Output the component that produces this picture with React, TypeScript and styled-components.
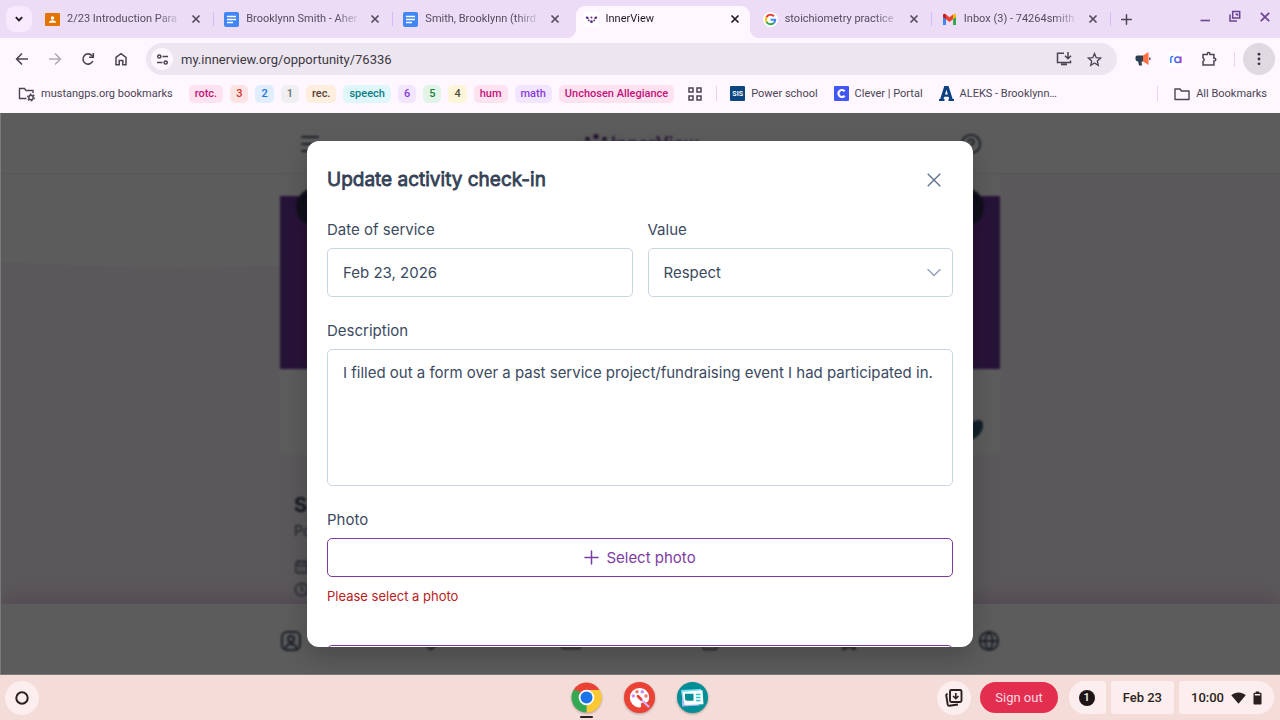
import React, { useState } from "react";
import styled, { createGlobalStyle, css } from "styled-components";
import {
  Menu,
  CircleHelp,
  CalendarDays,
  Clock,
  Globe,
  HeartHandshake,
  Mail,
  ClipboardList,
  Star,
} from "lucide-react";

const GlobalStyle = createGlobalStyle`
  * { box-sizing: border-box; }
  body {
    margin: 0;
    font-family: Roboto, "Liberation Sans", sans-serif;
    font-size: 12px;
    color: #4b4453;
  }
  button, input, select, textarea { font: inherit; color: inherit; margin: 0; }
  button { border: 0; padding: 0; background: none; cursor: pointer; }
  a { color: inherit; text-decoration: none; }
  svg { display: block; flex: none; }
`;

const Screen = styled.div`
  display: flex;
  flex-direction: column;
  min-height: 100vh;
  overflow: hidden;
`;

/* ---------- Browser: tab strip ---------- */

const TabStrip = styled.div`
  display: flex;
  align-items: center;
  height: 38px;
  background: #ecdcf6;
`;

const TabSearch = styled.button`
  display: grid;
  place-items: center;
  width: 26px;
  height: 26px;
  margin: 0 3px 0 6px;
  border-radius: 9px;
  background: #f8e9fd;
  color: #1f1a24;
`;

const TabList = styled.div`
  display: flex;
  flex: 0 1 1076px;
  min-width: 0;
  height: 38px;
`;

const Tab = styled.div<{ $active?: boolean; $divider?: boolean }>`
  position: relative;
  display: flex;
  flex: 1 1 0;
  align-items: center;
  min-width: 0;
  padding: 0 11px 0 10px;
  color: ${(p) => (p.$active ? "#1f1a24" : "#554c5e")};

  ${(p) =>
    p.$divider &&
    css`
      &::after {
        content: "";
        position: absolute;
        right: 0;
        top: 12px;
        width: 1px;
        height: 14px;
        background: #d9b8fb;
      }
    `}

  ${(p) =>
    p.$active &&
    css`
      margin: 6px 3px 0;
      padding: 0 8px 6px 8px;
      border-radius: 9px 9px 0 0;
      background: #fef7ff;

      &::before,
      &::after {
        content: "";
        position: absolute;
        bottom: 0;
        width: 9px;
        height: 9px;
      }
      &::before {
        right: 100%;
        background: radial-gradient(circle at 0 0, transparent 9px, #fef7ff 9px);
      }
      &::after {
        left: 100%;
        background: radial-gradient(circle at 100% 0, transparent 9px, #fef7ff 9px);
      }
    `}
`;

const TabTitle = styled.button`
  flex: 1;
  min-width: 0;
  margin-left: 7px;
  overflow: hidden;
  font-size: 11px;
  line-height: 16px;
  text-align: left;
  white-space: nowrap;
  mask-image: linear-gradient(90deg, #000 78%, transparent 100%);
`;

const TabClose = styled.button`
  display: grid;
  place-items: center;
  width: 14px;
  height: 14px;
  margin-left: 7px;
`;

const NewTab = styled.button`
  display: grid;
  place-items: center;
  width: 28px;
  height: 28px;
  margin-left: 1px;
`;

const WindowControls = styled.div`
  display: flex;
  gap: 14px;
  margin-left: auto;
  padding: 0 7px 5px 0;
  color: #6b4494;
`;

const WindowButton = styled.button`
  display: grid;
  place-items: center;
  width: 16px;
  height: 16px;
`;

/* ---------- Browser: toolbar ---------- */

const Toolbar = styled.div`
  display: flex;
  align-items: center;
  height: 42px;
  padding: 0 5px;
  background: #fef7ff;
`;

const ToolButton = styled.button<{ $dim?: boolean }>`
  display: grid;
  place-items: center;
  width: 33px;
  height: 32px;
  opacity: ${(p) => (p.$dim ? 0.42 : 1)};
`;

const Omnibox = styled.div`
  display: flex;
  flex: 1;
  align-items: center;
  min-width: 0;
  height: 32px;
  margin: 0 9px;
  padding: 0 8px 0 5px;
  border-radius: 16px;
  background: #ece6f0;
`;

const SiteInfo = styled.button`
  display: grid;
  place-items: center;
  width: 22px;
  height: 22px;
  border-radius: 50%;
  background: #fef7ff;
`;

const Address = styled.input`
  flex: 1;
  min-width: 0;
  height: 24px;
  margin-left: 8px;
  padding: 0;
  border: 0;
  outline: 0;
  background: transparent;
  color: #3d3843;
  font-size: 13px;
`;

const OmniButton = styled.button`
  display: grid;
  place-items: center;
  width: 30px;
  height: 28px;
`;

const ToolDivider = styled.span`
  width: 1px;
  height: 15px;
  margin: 0 8px 0 9px;
  background: #e6d0fb;
`;

const MenuButton = styled.button`
  display: grid;
  place-items: center;
  width: 32px;
  height: 32px;
  border-radius: 50%;
  background: #e0d9e1;
`;

/* ---------- Browser: bookmarks ---------- */

const BookmarkBar = styled.nav`
  display: flex;
  align-items: center;
  height: 33px;
  padding: 0 13px 6px 18px;
  background: #fef7ff;
  font-size: 11px;
  white-space: nowrap;
`;

const Bookmark = styled.a`
  display: flex;
  align-items: center;
  gap: 6px;
  margin-right: 16px;
`;

const AllBookmarks = styled(Bookmark)`
  margin: 0 0 0 16px;
`;

const Groups = styled.div`
  display: flex;
  gap: 7px;
`;

const Group = styled.button<{ $bg: string; $fg: string }>`
  height: 18px;
  padding: 0 6px;
  border-radius: 5px;
  background: ${(p) => p.$bg};
  color: ${(p) => p.$fg};
  font-weight: 500;
  line-height: 18px;
`;

const AppsButton = styled.button`
  margin: 0 14px;
`;

const BarDivider = styled.span<{ $push?: boolean }>`
  width: 1px;
  height: 15px;
  margin-left: ${(p) => (p.$push ? "auto" : "0")};
  margin-right: ${(p) => (p.$push ? "0" : "13px")};
  background: #e6d0fb;
`;

/* ---------- Page behind the dialog ---------- */

const Viewport = styled.main`
  position: relative;
  display: flex;
  flex: 1;
  min-height: 0;
  overflow: hidden;
  font-family: Inter, "Liberation Sans", sans-serif;
  background: radial-gradient(ellipse 640px 155px at 14% 0, #fff 99%, #fdf4fc 100%);
`;

const Page = styled.div`
  display: flex;
  flex: 1;
  flex-direction: column;
  min-width: 0;
  color: #475569;
`;

const SiteHeader = styled.header`
  height: 61px;
  border-bottom: 1px solid #f0eef2;
  background: #fff;
`;

const Column = styled.div`
  display: flex;
  align-items: center;
  justify-content: space-between;
  width: 100%;
  max-width: 720px;
  margin: 0 auto;
  filter: blur(1px);
`;

const HeaderRow = styled(Column)`
  height: 62px;
  padding: 0 18px;
`;

const Brand = styled.div`
  display: flex;
  align-items: center;
  gap: 2px;
  color: #6c359b;
  font-size: 18px;
  font-weight: 600;
  line-height: 24px;
`;

const Article = styled.article`
  flex: 1;
  width: 100%;
  max-width: 720px;
  margin: 0 auto;
  filter: blur(1px);
`;

const Card = styled.div`
  display: flex;
  flex-direction: column;
  height: 281px;
  padding-top: 22px;
  background: #fff;
`;

const Banner = styled.div`
  display: flex;
  justify-content: space-between;
  align-items: flex-start;
  height: 173px;
  padding: 0 16px;
  background: #6c359b;
`;

const RoundButton = styled.button`
  display: grid;
  place-items: center;
  width: 38px;
  height: 38px;
  margin-top: -8px;
  border-radius: 50%;
  background: #2a2c4c;
  color: #fff;
`;

const CardFooter = styled.div`
  display: flex;
  flex: 1;
  align-items: center;
  justify-content: flex-end;
  padding: 36px 16px 0;
`;

const Summary = styled.div`
  display: flex;
  flex-direction: column;
  padding: 36px 14px 0;
`;

const SummaryTitle = styled.h2`
  margin: 0;
  color: #334155;
  font-size: 20px;
  font-weight: 700;
  line-height: 28px;
`;

const SummaryLine = styled.p`
  display: flex;
  align-items: center;
  gap: 8px;
  height: 23px;
  margin: 0;
  font-size: 14px;
  line-height: 23px;
`;

const SummaryOwner = styled(SummaryLine)`
  margin-bottom: 13px;
`;

const SiteNav = styled.nav`
  height: 71px;
  background: #fff;
  box-shadow: 0 -8px 20px rgba(60, 20, 80, 0.16);
`;

const NavRow = styled(Column)`
  height: 74px;
`;

/* ---------- Dialog ---------- */

const Overlay = styled.div`
  position: absolute;
  inset: 0;
  display: flex;
  justify-content: center;
  padding: 28px 20px;
  background: rgba(0, 0, 0, 0.64);
  box-shadow: inset 1px -1px #7a7a7a;
`;

const Dialog = styled.section`
  display: flex;
  flex-direction: column;
  width: 100%;
  max-width: 666px;
  padding: 20px 20px 0;
  overflow: hidden;
  border-radius: 12px;
  background: #fff;
  color: #3b4a5f;
  font-size: 15px;
  line-height: 24px;
  box-shadow: 0 10px 24px rgba(0, 0, 0, 0.2);
`;

const DialogHeader = styled.header`
  display: flex;
  align-items: center;
  justify-content: space-between;
  height: 38px;
  flex: none;
  margin-bottom: 19px;
`;

const DialogTitle = styled.h1`
  margin: 0;
  color: #334155;
  font-size: 19px;
  font-weight: 400;
  line-height: 28px;
  -webkit-text-stroke: 0.04em #334155;
`;

const DialogClose = styled.button`
  display: grid;
  place-items: center;
  width: 38px;
  height: 38px;
  color: #64748b;
`;

const Form = styled.form`
  display: flex;
  flex-direction: column;
  gap: 22px;
`;

const FieldRow = styled.div`
  display: grid;
  grid-template-columns: 1fr 1fr;
  gap: 15px;
`;

const Field = styled.div`
  display: flex;
  flex-direction: column;
  min-width: 0;
`;

const Label = styled.label`
  margin-bottom: 6px;
`;

const control = css`
  width: 100%;
  border: 1px solid #cbd5e1;
  border-radius: 5px;
  outline: 0;
  background: #fff;
`;

const TextInput = styled.input`
  ${control}
  height: 49px;
  padding: 0 15px;
`;

const SelectWrap = styled.div`
  position: relative;

  svg {
    position: absolute;
    top: 16px;
    right: 11px;
    color: #94a3b8;
    pointer-events: none;
  }
`;

const Select = styled.select`
  ${control}
  appearance: none;
  height: 49px;
  padding: 0 36px 0 15px;
`;

const TextArea = styled.textarea`
  ${control}
  display: block;
  height: 137px;
  padding: 11px 15px;
  line-height: 24px;
  resize: none;
`;

const OutlineButton = styled.button`
  display: flex;
  align-items: center;
  justify-content: center;
  gap: 7px;
  width: 100%;
  height: 39px;
  border: 1px solid #7e3ca3;
  border-radius: 5px;
  color: #7e3ca3;
`;

const ErrorText = styled.p`
  margin: 8px 0 16px;
  color: #b91c1c;
  font-size: 13px;
  line-height: 22px;
`;

/* ---------- Shelf ---------- */

const Shelf = styled.footer`
  display: grid;
  grid-template-columns: 1fr auto 1fr;
  align-items: center;
  height: 45px;
  padding: 0 6px 0 5px;
  background: #f4dcd8;
  color: #2b1f20;
`;

const ShelfCircle = styled.button`
  display: grid;
  place-items: center;
  width: 34px;
  height: 34px;
  border-radius: 50%;
  background: #fceeee;
`;

const Apps = styled.div`
  display: flex;
  gap: 20px;
`;

const AppButton = styled.button<{ $running?: boolean }>`
  position: relative;
  width: 33px;
  height: 33px;

  svg { filter: drop-shadow(0 1px 1px rgba(60, 20, 20, 0.35)); }

  ${(p) =>
    p.$running &&
    css`
      &::after {
        content: "";
        position: absolute;
        left: 10px;
        top: 35px;
        width: 13px;
        height: 2px;
        border-radius: 1px;
        background: #2b1f20;
      }
    `}
`;

const Tray = styled.div`
  display: flex;
  align-items: center;
  justify-content: flex-end;
  gap: 5px;
`;

const SignOut = styled.button`
  height: 31px;
  margin: 0 6px 0 4px;
  padding: 0 15px;
  border-radius: 16px;
  background: #e42e50;
  color: #fcd9e0;
  font-size: 13px;
`;

const TrayPill = styled.button<{ $side?: "left" | "right" }>`
  display: flex;
  align-items: center;
  gap: 7px;
  height: 33px;
  padding: ${(p) => (p.$side === "left" ? "0 11px 0 10px" : "0 12px")};
  border-radius: ${(p) =>
    p.$side === "left" ? "16px 3px 3px 16px" : p.$side === "right" ? "3px 16px 16px 3px" : "3px"};
  background: #fceeee;
  font-size: 13px;
  font-weight: 500;
`;

/* ---------- Icons ---------- */

const line = { fill: "none", stroke: "currentColor" } as const;

const CloseIcon = ({ size = 10, weight = 1.7 }) => (
  <svg width={size} height={size} viewBox="0 0 10 10" {...line} strokeWidth={weight}>
    <path d="M1.500 1.500l7 7M8.500 1.500l-7 7" />
  </svg>
);

const ClassroomIcon = () => (
  <svg width="15" height="15" viewBox="0 0 15 15">
    <rect y="1" width="15" height="13" rx="1" fill="#e37400" />
    <circle cx="7.500" cy="6" r="1.700" fill="#fff" />
    <path d="M3.800 10.800c0-1.800 2.100-2.600 3.700-2.600s3.700.8 3.700 2.600z" fill="#fff" />
  </svg>
);

const DocsIcon = () => (
  <svg width="15" height="15" viewBox="0 0 15 15">
    <rect width="15" height="15" rx="2" fill="#4285f4" />
    <path d="M3 4.500h9M3 7.500h9M3 10.500h6" stroke="#fff" strokeWidth="1.500" />
  </svg>
);

const InnerViewIcon = () => (
  <svg width="15" height="15" viewBox="0 0 15 15" fill="#5b2a86">
    <rect width="15" height="15" rx="2" fill="#fff" />
    <circle cx="3" cy="5.600" r="1.200" />
    <path d="M2.200 4.800l3.200 1.200-2 1.200z" />
    <circle cx="12" cy="5.600" r="1.200" />
    <path d="M12.800 4.800L9.600 6l2 1.200z" />
    <circle cx="7.500" cy="5.500" r="1" />
    <circle cx="4.800" cy="8.400" r="0.900" />
    <circle cx="10.200" cy="8.400" r="0.900" />
    <circle cx="7.500" cy="9.700" r="1.400" />
  </svg>
);

const BrandSparks = () => (
  <svg width="26" height="26" viewBox="0 0 26 26" fill="#5b2a86">
    <circle cx="4.500" cy="8" r="2.300" />
    <circle cx="13" cy="5.500" r="2.600" />
    <circle cx="21.500" cy="8" r="2.300" />
    <circle cx="9" cy="12" r="1.700" />
    <circle cx="17" cy="12" r="1.700" />
    <circle cx="13" cy="17" r="2.600" />
  </svg>
);

const GoogleIcon = () => (
  <svg width="15" height="15" viewBox="0 0 15 15">
    <circle cx="7.500" cy="7.500" r="7.500" fill="#fff" />
    <g fill="none" strokeWidth="2.100">
      <path d="M11 4.300A4.700 4.700 0 0 0 3.500 5.100" stroke="#ea4335" />
      <path d="M3.500 5.100a4.700 4.700 0 0 0 0 4.900" stroke="#fbbc05" />
      <path d="M3.500 10a4.700 4.700 0 0 0 7.200 1" stroke="#34a853" />
      <path d="M10.700 11a4.700 4.700 0 0 0 1.500-3.300H7.600" stroke="#4285f4" />
    </g>
  </svg>
);

const GmailIcon = () => (
  <svg width="15" height="15" viewBox="0 0 15 15">
    <path d="M1 4v9h3V6.500z" fill="#4285f4" />
    <path d="M14 4v9h-3V6.500z" fill="#34a853" />
    <path d="M1 5V3.300C1 2 2.500 1.400 3.500 2.200L4 2.600v4.600z" fill="#c5221f" />
    <path d="M14 5V3.300c0-1.300-1.500-1.900-2.500-1.100l-.5.4v4.600z" fill="#fbbc04" />
    <path d="M4 2.600l3.500 2.700L11 2.600v4.600L7.500 9.900 4 7.200z" fill="#ea4335" />
  </svg>
);

const MinimizeIcon = () => (
  <svg width="16" height="16" viewBox="0 0 16 16" {...line} strokeWidth="1.600">
    <path d="M3.500 11.500h9.500" />
  </svg>
);

const RestoreIcon = () => (
  <svg width="16" height="16" viewBox="0 0 16 16" {...line} strokeWidth="1.500">
    <path d="M5.700 2.500h7v6.500h-7zM8.500 5.200h2v1.600M3 5.500v6.500h7" />
  </svg>
);

const BackIcon = () => (
  <svg width="14" height="14" viewBox="0 0 14 14" {...line} strokeWidth="1.600">
    <path d="M13 7H2M7 1.500L1.600 7 7 12.500" />
  </svg>
);

const ForwardIcon = () => (
  <svg width="14" height="14" viewBox="0 0 14 14" {...line} strokeWidth="1.600">
    <path d="M1 7h11M7 1.500L12.400 7 7 12.500" />
  </svg>
);

const ReloadIcon = () => (
  <svg width="14" height="14" viewBox="0 0 14 14" {...line} strokeWidth="1.600">
    <path d="M11.800 9A5.100 5.100 0 1 1 11 3.700l1 1.200" />
    <path d="M12.300 1v4.300H8" />
  </svg>
);

const HomeIcon = () => (
  <svg width="14" height="14" viewBox="0 0 14 14" {...line} strokeWidth="1.500">
    <path d="M2 5.400L7 1.600l5 3.800v7.300H8.800V8.500H5.200v4.200H2z" />
  </svg>
);

const TuneIcon = () => (
  <svg width="13" height="13" viewBox="0 0 13 13" {...line} strokeWidth="1.500">
    <circle cx="3.300" cy="3.500" r="1.600" />
    <path d="M6.500 3.500H12M1 9.500h5.500" />
    <circle cx="9.700" cy="9.500" r="1.600" />
  </svg>
);

const InstallIcon = () => (
  <svg width="16" height="16" viewBox="0 0 16 16" {...line} strokeWidth="1.500">
    <path d="M8 2.200H1.500v9.300h13V9.500" />
    <path d="M5 13.300h6" strokeWidth="2" />
    <path d="M12 1v6.500M9 4.700l3 3 3-3" />
  </svg>
);

const BookmarkStarIcon = () => (
  <svg width="15" height="15" viewBox="0 0 15 15" {...line} strokeWidth="1.300">
    <path d="M7.500 1.600l1.700 4.100 4.400.4-3.300 2.900 1 4.300-3.800-2.300-3.800 2.300 1-4.300L1.400 6.100l4.400-.4z" />
  </svg>
);

const MegaphoneIcon = () => (
  <svg width="16" height="16" viewBox="0 0 16 16">
    <path d="M0.500 6.500C.5 5 1.500 4.500 3 4.500h5v6H6.500l.5 4H4l-.8-4C1.500 10.300.5 9.500.5 8z" fill="#2c3e50" />
    <path d="M8 4.500l5.500-3.500v13l-5.500-3.500z" fill="#ff7043" />
    <path d="M14.800 6.500v2.500" stroke="#2c3e50" strokeWidth="1.300" />
  </svg>
);

const RaIcon = () => (
  <svg width="14" height="14" viewBox="0 0 14 14" fill="none" strokeWidth="1.500">
    <rect width="14" height="14" rx="2" fill="#fff" />
    <path d="M1.800 11V6.500c0-1.400 1-2 2.600-1.900" stroke="#2d7ff0" />
    <circle cx="8.700" cy="7.700" r="2.800" stroke="#5661e8" />
    <path d="M11.800 4.500V11" stroke="#a33fd0" />
  </svg>
);

const PuzzleIcon = () => (
  <svg width="16" height="16" viewBox="0 0 16 16" {...line} strokeWidth="1.500">
    <path d="M2 3.500h4.300V2.800a1.300 1.300 0 0 1 2.600 0v.7h4v3.800h.6a1.300 1.300 0 0 1 0 2.600h-.6v4H2v-3.500a2 2 0 0 0 0-3.600z" />
  </svg>
);

const DotsIcon = () => (
  <svg width="4" height="14" viewBox="0 0 4 14" fill="#3d3544">
    <circle cx="2" cy="2.200" r="1.400" />
    <circle cx="2" cy="7" r="1.400" />
    <circle cx="2" cy="11.800" r="1.400" />
  </svg>
);

const FolderIcon = () => (
  <svg width="16" height="14" viewBox="0 0 16 14" {...line} strokeWidth="1.400">
    <path d="M1 2h5l1.500 2H15v8.500H1z" strokeLinejoin="round" />
  </svg>
);

const ManagedFolderIcon = () => (
  <svg width="17" height="16" viewBox="0 0 17 16" {...line} strokeWidth="1.400">
    <path d="M8.500 12.500h-7V2.500h5l1.500 2h7V7" />
    <circle cx="13" cy="11.500" r="2.200" />
    <circle cx="13" cy="11.500" r="3.300" strokeDasharray="1.700 1.750" />
  </svg>
);

const AppsIcon = () => (
  <svg width="14" height="14" viewBox="0 0 14 14" {...line} strokeWidth="1.500">
    <path d="M1 1h4v4H1zM9 1h4v4H9zM1 9h4v4H1zM9 9h4v4H9z" />
  </svg>
);

const SisBadge = styled.span`
  display: grid;
  place-items: center;
  width: 15px;
  height: 15px;
  border-radius: 1px;
  background: #0b4680;
  color: #fff;
  font-size: 7px;
  font-weight: 700;
`;

const CleverIcon = () => (
  <svg width="15" height="15" viewBox="0 0 15 15">
    <rect width="15" height="15" rx="1" fill="#4258f5" />
    <path d="M10.600 5.200A3.500 3.500 0 1 0 10.600 9.800" fill="none" stroke="#fff" strokeWidth="2.200" />
  </svg>
);

const AleksIcon = () => (
  <svg width="15" height="15" viewBox="0 0 15 15" fill="#0d4080">
    <path fillRule="evenodd" d="M5.300 0h4.200l4.200 13H15v2H9.500v-2h.8l-.7-2.300H5.300L4.500 13h1v2H0v-2h1.200zM7.400 3.800L6 8.500h2.900z" />
  </svg>
);

const ProfileIcon = () => (
  <svg width="22" height="22" viewBox="0 0 22 22" {...line} strokeWidth="2">
    <rect x="2" y="2" width="18" height="18" rx="5" />
    <circle cx="11" cy="9" r="3" />
    <path d="M5 19c1-3.500 3-5 6-5s5 1.500 6 5" />
  </svg>
);

const LeafIcon = () => (
  <svg width="22" height="26" viewBox="0 0 22 26" fill="#2f5a73">
    <path d="M3 25C1 12 8 3 18 3c4 1 4 8 1 12-3 5-8 8-16 10z" />
  </svg>
);

const ChevronIcon = () => (
  <svg width="16" height="16" viewBox="0 0 16 16" {...line} strokeWidth="1.500" strokeLinecap="round" strokeLinejoin="round">
    <path d="M2 5.500l6 6 6-6" />
  </svg>
);

const PlusIcon = ({ size = 15, weight = 1.5 }) => (
  <svg width={size} height={size} viewBox="0 0 15 15" {...line} strokeWidth={weight} strokeLinecap="round">
    <path d="M7.500 1v13M1 7.500h13" />
  </svg>
);

const ChromeIcon = () => (
  <svg width="33" height="33" viewBox="0 0 33 33">
    <path d="M16.500 16.500L3.510 9A15 15 0 0 1 29.490 9z" fill="#ea4335" />
    <path d="M16.500 16.500L29.490 9A15 15 0 0 1 16.500 31.500z" fill="#fbc934" />
    <path d="M16.500 16.500V31.500A15 15 0 0 1 3.510 9z" fill="#34a853" />
    <path d="M16.500 9h13A15 15 0 0 1 16.500 31.500l6.500-11.300z" fill="#fbc934" />
    <path d="M10 20.300L3.510 9l6 1z" fill="#34a853" />
    <circle cx="16.500" cy="16.500" r="7.800" fill="#fff" />
    <circle cx="16.500" cy="16.500" r="6" fill="#1a73e8" />
  </svg>
);

const CanvasIcon = () => (
  <svg width="33" height="33" viewBox="0 0 33 33">
    <circle cx="16.500" cy="16.500" r="15.500" fill="#ea4335" />
    <path d="M16.500 7a9.700 9.700 0 1 0 0 19.400c1.500 0 2-1 1.600-2.200-.6-1.700.2-2.700 2-2.700h2.200c2.300 0 3.900-2 3.900-4.800C26.200 11 22 7 16.500 7z" fill="#fff" />
    <circle cx="10.300" cy="15" r="1.700" fill="#d78bf0" />
    <circle cx="14" cy="10.700" r="1.700" fill="#f0776b" />
    <circle cx="19.300" cy="10.700" r="1.700" fill="#c58af9" />
    <circle cx="23" cy="15" r="1.700" fill="#f0776b" />
    <path d="M16.500 17l9 8.500" stroke="#d7aefb" strokeWidth="2.300" strokeLinecap="round" />
    <path d="M15 15.300l3 2.900" stroke="#ea4335" strokeWidth="2.800" strokeLinecap="round" />
  </svg>
);

const ScreencastIcon = () => (
  <svg width="33" height="33" viewBox="0 0 33 33">
    <circle cx="16.500" cy="16.500" r="15.500" fill="#008f96" />
    <path d="M5 9l20-1-1 14H7z" fill="#7ce0f0" />
    <path d="M6 11l0 14.500 18-1z" fill="#a8b8f8" />
    <path d="M6.500 11l20-1.800 1 14L8.500 24z" fill="#fff" />
    <path d="M9 12.800h8.500v7H11a2 2 0 0 1-2-2z" fill="#008f96" />
    <path d="M20 13.500h4.500M20 16.500h4.500M20 19.500h4.500" stroke="#2bc3cc" strokeWidth="1.300" />
  </svg>
);

const ToteIcon = () => (
  <svg width="20" height="20" viewBox="0 0 20 20" {...line} strokeWidth="1.900">
    <rect x="6" y="2" width="11.500" height="12" rx="1.500" />
    <path d="M3.500 5.500L2.200 7l1.500 9.500c.2 1 .8 1.300 1.700 1.200l8.600-1.200" />
    <path d="M11.800 5v5.500M9 8l2.800 2.700L14.500 8" strokeWidth="1.600" />
  </svg>
);

const WifiIcon = () => (
  <svg width="15" height="12" viewBox="0 0 15 12" fill="currentColor">
    <path d="M7.500 11.700L.3 3.200C4.500-.3 10.500-.3 14.700 3.200z" />
  </svg>
);

const BatteryIcon = () => (
  <svg width="9" height="14" viewBox="0 0 9 14" fill="currentColor">
    <path fillRule="evenodd" d="M2.800.500h3.400v1.200H7.500c.6 0 1 .4 1 1V12.500c0 .6-.4 1-1 1h-6c-.6 0-1-.4-1-1V2.700c0-.6.4-1 1-1h1.300zM1.800 3v1.600h5.400V3z" />
  </svg>
);

const CountBadge = styled.span`
  display: grid;
  place-items: center;
  width: 16px;
  height: 16px;
  border-radius: 50%;
  background: #1f1416;
  color: #fff;
  font-size: 11px;
  font-weight: 500;
`;

/* ---------- Data ---------- */

const tabs = [
  { title: "2/23 Introduction Para", icon: <ClassroomIcon />, divider: true },
  { title: "Brooklynn Smith - Aher", icon: <DocsIcon />, divider: true },
  { title: "Smith, Brooklynn (third", icon: <DocsIcon /> },
  { title: "InnerView", icon: <InnerViewIcon />, active: true },
  { title: "stoichiometry practice", icon: <GoogleIcon />, divider: true },
  { title: "Inbox (3) - 74264smith", icon: <GmailIcon />, divider: true },
];

const groups = [
  { name: "rotc.", bg: "#fde3ef", fg: "#c2127c" },
  { name: "3", bg: "#fce4e4", fg: "#d63330" },
  { name: "2", bg: "#e0edfd", fg: "#2474d8" },
  { name: "1", bg: "#f0f0f3", fg: "#6b7075" },
  { name: "rec.", bg: "#fdeede", fg: "#55423a" },
  { name: "speech", bg: "#dff6fa", fg: "#0d7e86" },
  { name: "6", bg: "#f1e6fd", fg: "#8a3bd8" },
  { name: "5", bg: "#e2f3e8", fg: "#1d7f3c" },
  { name: "4", bg: "#fdf5d9", fg: "#55503a" },
  { name: "hum", bg: "#fde3ef", fg: "#c2127c" },
  { name: "math", bg: "#f1e6fd", fg: "#8a3bd8" },
  { name: "Unchosen Allegiance", bg: "#fde3ef", fg: "#c2127c" },
];

/* ---------- Sections ---------- */

const Browser = () => {
  const [url, setUrl] = useState("my.innerview.org/opportunity/76336");
  return (
    <header>
      <TabStrip>
        <TabSearch aria-label="Search tabs">
          <svg width="8" height="6" viewBox="0 0 8 6" {...line} strokeWidth="1.900">
            <path d="M.8 1.200L4 4.400l3.200-3.200" />
          </svg>
        </TabSearch>
        <TabList>
          {tabs.map((t) => (
            <Tab key={t.title} $active={t.active} $divider={t.divider}>
              {t.icon}
              <TabTitle>{t.title}</TabTitle>
              <TabClose aria-label={`Close ${t.title}`}>
                <CloseIcon />
              </TabClose>
            </Tab>
          ))}
        </TabList>
        <NewTab aria-label="New tab">
          <PlusIcon size={11} weight={2} />
        </NewTab>
        <WindowControls>
          <WindowButton aria-label="Minimize"><MinimizeIcon /></WindowButton>
          <WindowButton aria-label="Restore"><RestoreIcon /></WindowButton>
          <WindowButton aria-label="Close window"><CloseIcon size={12} weight={1.4} /></WindowButton>
        </WindowControls>
      </TabStrip>
      <Toolbar>
        <ToolButton aria-label="Back"><BackIcon /></ToolButton>
        <ToolButton aria-label="Forward" $dim><ForwardIcon /></ToolButton>
        <ToolButton aria-label="Reload"><ReloadIcon /></ToolButton>
        <ToolButton aria-label="Home"><HomeIcon /></ToolButton>
        <Omnibox>
          <SiteInfo aria-label="Site information"><TuneIcon /></SiteInfo>
          <Address aria-label="Address" value={url} onChange={(e) => setUrl(e.target.value)} />
          <OmniButton aria-label="Install app"><InstallIcon /></OmniButton>
          <OmniButton aria-label="Bookmark this page"><BookmarkStarIcon /></OmniButton>
        </Omnibox>
        <ToolButton aria-label="Announcements"><MegaphoneIcon /></ToolButton>
        <ToolButton aria-label="Reading assistant"><RaIcon /></ToolButton>
        <ToolButton aria-label="Extensions"><PuzzleIcon /></ToolButton>
        <ToolDivider />
        <MenuButton aria-label="Browser menu"><DotsIcon /></MenuButton>
      </Toolbar>
      <BookmarkBar>
        <Bookmark href="#managed"><ManagedFolderIcon />mustangps.org bookmarks</Bookmark>
        <Groups>
          {groups.map((g) => (
            <Group key={g.name} $bg={g.bg} $fg={g.fg}>{g.name}</Group>
          ))}
        </Groups>
        <AppsButton aria-label="Tab groups"><AppsIcon /></AppsButton>
        <BarDivider />
        <Bookmark href="#powerschool"><SisBadge>SIS</SisBadge>Power school</Bookmark>
        <Bookmark href="#clever"><CleverIcon />Clever | Portal</Bookmark>
        <Bookmark href="#aleks"><AleksIcon />ALEKS - Brooklynn…</Bookmark>
        <BarDivider $push />
        <AllBookmarks href="#all"><FolderIcon />All Bookmarks</AllBookmarks>
      </BookmarkBar>
    </header>
  );
};

const Opportunity = () => (
  <Page aria-hidden="true">
    <SiteHeader>
      <HeaderRow>
        <Menu size={24} />
        <Brand><BrandSparks />InnerView</Brand>
        <CircleHelp size={22} />
      </HeaderRow>
    </SiteHeader>
    <Article>
      <Card>
        <Banner>
          <RoundButton tabIndex={-1} />
          <RoundButton tabIndex={-1} />
        </Banner>
        <CardFooter><LeafIcon /></CardFooter>
      </Card>
      <Summary>
        <SummaryTitle>S</SummaryTitle>
        <SummaryOwner>Po</SummaryOwner>
        <SummaryLine><CalendarDays size={15} /></SummaryLine>
        <SummaryLine><Clock size={15} /></SummaryLine>
      </Summary>
    </Article>
    <SiteNav>
      <NavRow>
        <ProfileIcon />
        <HeartHandshake size={22} />
        <Mail size={22} />
        <ClipboardList size={20} />
        <Star size={22} />
        <Globe size={22} />
      </NavRow>
    </SiteNav>
  </Page>
);

const CheckInDialog = () => (
  <Overlay>
    <Dialog role="dialog" aria-labelledby="dialog-title">
      <DialogHeader>
        <DialogTitle id="dialog-title">Update activity check-in</DialogTitle>
        <DialogClose aria-label="Close"><CloseIcon size={18} weight={0.8} /></DialogClose>
      </DialogHeader>
      <Form onSubmit={(e) => e.preventDefault()}>
        <FieldRow>
          <Field>
            <Label htmlFor="date">Date of service</Label>
            <TextInput id="date" defaultValue="Feb 23, 2026" />
          </Field>
          <Field>
            <Label htmlFor="value">Value</Label>
            <SelectWrap>
              <Select id="value" defaultValue="Respect">
                <option>Respect</option>
              </Select>
              <ChevronIcon />
            </SelectWrap>
          </Field>
        </FieldRow>
        <Field>
          <Label htmlFor="description">Description</Label>
          <TextArea
            id="description"
            spellCheck={false}
            defaultValue="I filled out a form over a past service project/fundraising event I had participated in."
          />
        </Field>
        <Field>
          <Label htmlFor="photo">Photo</Label>
          <OutlineButton id="photo" type="button"><PlusIcon />Select photo</OutlineButton>
          <ErrorText>Please select a photo</ErrorText>
        </Field>
        <OutlineButton type="submit" aria-label="Save" />
      </Form>
    </Dialog>
  </Overlay>
);

const SystemShelf = () => (
  <Shelf>
    <ShelfCircle aria-label="Launcher">
      <svg width="16" height="16" viewBox="0 0 16 16" {...line} strokeWidth="2">
        <circle cx="8" cy="8" r="5.700" />
      </svg>
    </ShelfCircle>
    <Apps>
      <AppButton aria-label="Chrome" $running><ChromeIcon /></AppButton>
      <AppButton aria-label="Canvas"><CanvasIcon /></AppButton>
      <AppButton aria-label="Screencast"><ScreencastIcon /></AppButton>
    </Apps>
    <Tray>
      <ShelfCircle aria-label="Tote"><ToteIcon /></ShelfCircle>
      <SignOut>Sign out</SignOut>
      <TrayPill $side="left" aria-label="Notifications"><CountBadge>1</CountBadge></TrayPill>
      <TrayPill>Feb 23</TrayPill>
      <TrayPill $side="right">10:00<WifiIcon /><BatteryIcon /></TrayPill>
    </Tray>
  </Shelf>
);

export default function App() {
  return (
    <>
      <GlobalStyle />
      <Screen>
        <Browser />
        <Viewport>
          <Opportunity />
          <CheckInDialog />
        </Viewport>
        <SystemShelf />
      </Screen>
    </>
  );
}
